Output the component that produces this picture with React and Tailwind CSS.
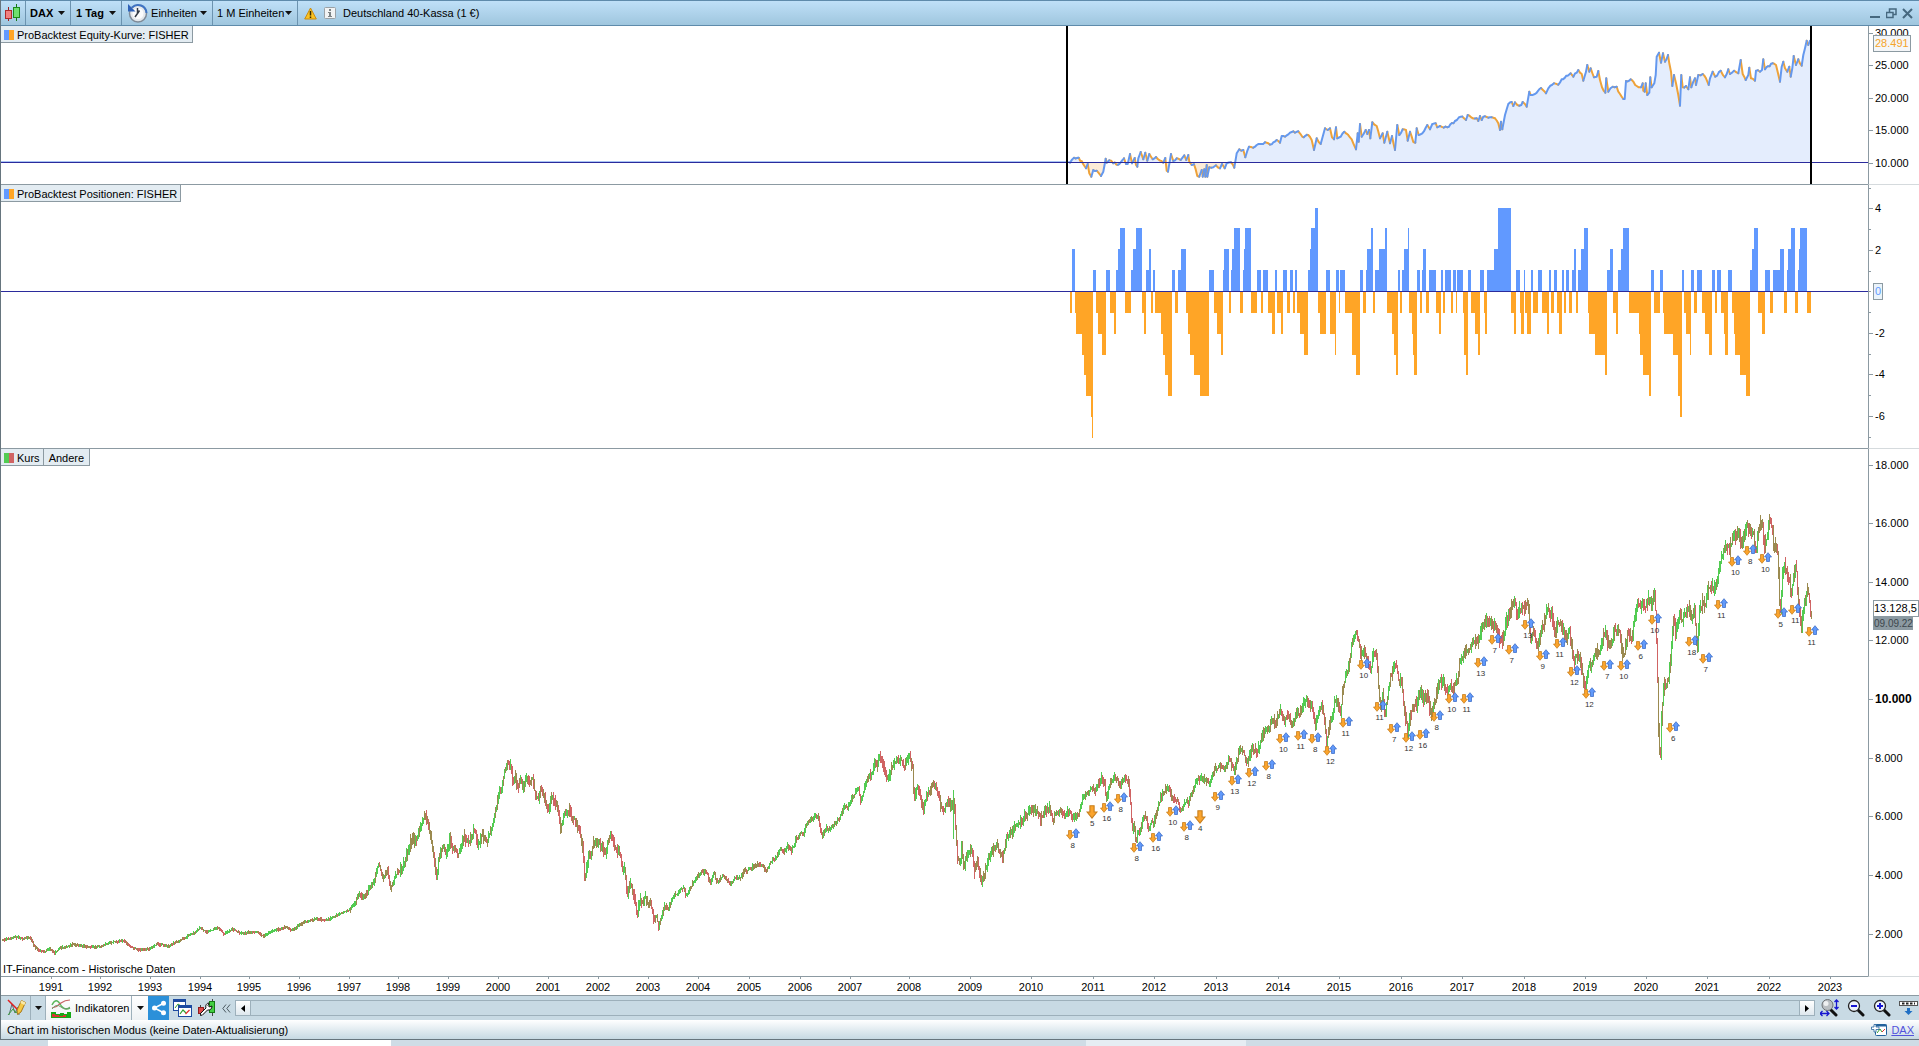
import React from 'react';

// Every leg is traced on its own fine grid: origin in chart pixels plus grid steps per pixel.
const leg = (x0, y0, step, points, stepY = step) => points.map(([x, y]) => [x0 + x / step, y0 + y / stepY]);

const priceAnchors = [
  ...leg(0, 700, 2.8, [
    [5, 718], [25, 715], [40, 708], [60, 715], [82, 710], [95, 738], [110, 752], [125, 752], [138, 745], [150, 758],
    [165, 742], [190, 738], [205, 730], [230, 738], [255, 740], [280, 738], [305, 726], [345, 720], [360, 735], [388, 750],
    [415, 745], [440, 730], [470, 737], [490, 725], [520, 710], [545, 695], [560, 683], [575, 695], [610, 682], [625, 700],
    [650, 686], [670, 698], [720, 694], [735, 708], [760, 692], [798, 680], [815, 690], [850, 665], [885, 655], [915, 658],
    [950, 640], [980, 625], [1003, 583], [1018, 588], [1045, 545], [1057, 490], [1073, 535], [1083, 505], [1092, 565],
    [1110, 515], [1122, 505], [1140, 455], [1155, 405], [1160, 430], [1175, 380], [1190, 340], [1205, 410], [1213, 465],
    [1220, 525], [1228, 475], [1240, 440], [1248, 475], [1257, 410], [1265, 440], [1280, 460], [1298, 408], [1312, 428],
    [1326, 385], [1336, 435], [1350, 400], [1362, 425], [1380, 360], [1390, 310], [1398, 260], [1405, 262], [1412, 205],
    [1420, 182], [1427, 195],
  ], 3),
  ...leg(510, 740, 3, [
    [0, 80], [8, 125], [14, 105], [22, 145], [30, 110], [38, 145], [47, 105], [55, 130], [66, 110], [74, 165], [85, 185],
    [92, 135], [103, 175], [113, 205], [126, 168], [135, 190], [145, 230], [149, 270], [153, 255], [160, 218], [178, 212],
    [185, 235], [200, 250], [210, 290], [217, 320], [223, 435], [229, 375], [236, 345], [240, 355], [248, 312], [258, 308],
    [268, 310], [284, 338], [296, 285], [306, 300], [318, 330], [325, 325], [333, 375], [337, 400], [341, 375], [351, 465],
    [358, 425], [368, 450], [380, 525], [387, 475], [396, 490], [403, 465], [413, 500], [418, 485], [428, 525], [435, 525],
    [444, 558], [452, 530], [463, 495], [473, 510], [485, 470], [500, 460], [518, 440], [527, 468], [545, 430], [573, 395],
    [590, 398], [600, 425], [610, 397], [620, 428], [638, 402], [658, 432], [675, 408], [688, 415], [700, 393], [740, 373],
    [757, 375], [765, 392], [785, 358], [795, 355], [808, 322], [820, 335], [832, 315], [842, 335], [855, 300], [872, 275],
    [878, 285], [890, 243], [905, 238], [922, 220], [928, 265], [937, 288], [946, 260], [955, 270], [985, 235], [1005, 190],
    [1010, 205], [1025, 172], [1043, 142], [1050, 185], [1062, 140], [1078, 100], [1082, 105], [1095, 60], [1100, 80],
    [1103, 52], [1113, 48], [1122, 95], [1130, 118], [1140, 95], [1150, 70], [1160, 55], [1175, 65], [1182, 90], [1188, 60],
    [1198, 50], [1206, 80], [1211, 185], [1216, 150], [1224, 145], [1232, 190], [1238, 205], [1247, 165], [1255, 160],
    [1269, 130], [1283, 165], [1297, 215], [1307, 185], [1325, 195], [1330, 180], [1335, 260], [1341, 350], [1348, 380],
    [1353, 310], [1361, 385], [1370, 340], [1384, 325], [1392, 390], [1400, 355], [1413, 432], [1425, 390], [1435, 350],
    [1447, 330], [1458, 310], [1468, 340], [1477, 350], [1487, 290], [1500, 280], [1512, 260], [1530, 245], [1551, 216],
    [1572, 204], [1590, 234], [1608, 204],
  ]),
  ...leg(1050, 600, 3, [
    [0, 630], [8, 665], [15, 635], [22, 645], [32, 625], [40, 650], [52, 630], [68, 655], [85, 635], [97, 595], [110, 580],
    [122, 562], [135, 568], [153, 532], [162, 545], [167, 600], [175, 560], [190, 525], [208, 555], [222, 530], [235, 545],
    [240, 610], [245, 690], [250, 665], [256, 725], [262, 700], [268, 695], [280, 640], [288, 660], [296, 690], [302, 655],
    [308, 670], [330, 590], [352, 555], [365, 590], [378, 600], [392, 635], [402, 610], [415, 600], [428, 565], [443, 535],
    [460, 535], [475, 550], [490, 510], [510, 495], [520, 510], [535, 475], [545, 500], [552, 515], [568, 440], [578, 455],
    [588, 490], [605, 445], [622, 455], [633, 410], [650, 385], [668, 355], [673, 375], [690, 330], [700, 370], [710, 335],
    [722, 375], [735, 345], [748, 335], [765, 303], [783, 320], [793, 380], [802, 345], [813, 315], [822, 360], [828, 425],
    [838, 375], [845, 350], [853, 300], [865, 315], [870, 340], [878, 250], [885, 220], [893, 205], [905, 125], [918, 100],
    [928, 135], [932, 165], [940, 145], [948, 180], [955, 190], [962, 215], [968, 150], [978, 165], [985, 270], [990, 330],
    [996, 280], [1003, 345], [1012, 280], [1020, 225], [1037, 188], [1045, 240], [1052, 240], [1060, 315], [1068, 375],
    [1072, 390], [1080, 340], [1088, 310], [1098, 315], [1108, 270], [1118, 300], [1130, 275], [1143, 350], [1150, 320],
    [1165, 245], [1180, 250], [1190, 275], [1198, 250], [1207, 270], [1215, 240], [1222, 250], [1228, 180], [1240, 170],
    [1252, 150], [1265, 130], [1275, 115], [1287, 110], [1300, 60], [1310, 65],
  ]),
  ...leg(1470, 450, 3, [
    [57, 510], [66, 515], [75, 540], [88, 560], [97, 565], [108, 510], [118, 490], [130, 455], [140, 490], [155, 475],
    [165, 465], [173, 448], [178, 575], [190, 550], [202, 585], [212, 545], [230, 480], [243, 490], [252, 545], [262, 510],
    [275, 535], [287, 570], [297, 540], [305, 600], [312, 640], [318, 610], [330, 630], [340, 695], [346, 705], [354, 645],
    [362, 645], [378, 605], [387, 610], [402, 545], [415, 580], [420, 590], [432, 540], [437, 530], [448, 545], [455, 615],
    [460, 620], [470, 555], [475, 540], [483, 570], [492, 505], [502, 460], [515, 470], [528, 465], [538, 440], [545, 470],
    [553, 420], [557, 540], [561, 680], [564, 830], [567, 900], [570, 910], [574, 780], [580, 700], [588, 700], [595, 690],
    [602, 610], [608, 500], [615, 540], [628, 480], [635, 520], [642, 490], [655, 465], [663, 510], [672, 480], [681, 600],
    [687, 480], [697, 455], [705, 460], [718, 400], [728, 420], [740, 395], [748, 340], [760, 290], [770, 285], [778, 300],
    [785, 260], [798, 255], [808, 255], [813, 280], [828, 227], [838, 235], [850, 260], [854, 305], [865, 235], [875, 205],
    [880, 290], [890, 260], [898, 205], [905, 240], [910, 285], [920, 280], [924, 370], [929, 500], [934, 400], [940, 335],
    [950, 375], [957, 390], [962, 430], [972, 360], [977, 345], [982, 450], [993, 525], [998, 480], [1012, 410], [1018, 470],
    [1022, 505], [1025, 490],
  ]),
];

const equityAnchors = [
  ...leg(1050, 20, 3, [
    [60, 428], [72, 413], [86, 413], [100, 433], [108, 445], [113, 432], [118, 460], [124, 470], [130, 450], [140, 452],
    [153, 468], [160, 455], [167, 416], [170, 428], [178, 421], [190, 430], [208, 432], [222, 415], [228, 432], [233, 432],
    [240, 402], [246, 430], [254, 414], [258, 435], [262, 440], [265, 415], [272, 396], [280, 418], [286, 398], [292, 422],
    [298, 402], [308, 418], [318, 411], [340, 428], [346, 414], [350, 452], [354, 455], [363, 402], [370, 423], [380, 415],
    [392, 420], [403, 406], [409, 420], [415, 405], [418, 425], [425, 435], [432, 433], [442, 468], [448, 470], [455, 450],
    [458, 470], [463, 448], [466, 470], [470, 435], [472, 470], [478, 442], [490, 442], [498, 436], [510, 445], [516, 432],
    [524, 445], [530, 430], [543, 427], [553, 443], [560, 400], [568, 388], [580, 390], [586, 412], [597, 380], [610, 383],
    [630, 372], [650, 368], [665, 373], [680, 360], [690, 368], [695, 348], [705, 350], [720, 338], [745, 334], [757, 350],
    [775, 345], [785, 360], [792, 390], [800, 355], [812, 372], [825, 325], [833, 330], [840, 325], [846, 352], [852, 358],
    [858, 322], [862, 355], [872, 350], [883, 335], [900, 352], [910, 370], [918, 388], [923, 340], [926, 365], [930, 312],
    [935, 350], [947, 330], [952, 342], [957, 330], [961, 355], [967, 307], [980, 318], [990, 355], [998, 340], [1003, 368],
    [1012, 335], [1020, 370], [1026, 348], [1035, 390], [1042, 315], [1048, 345], [1058, 328], [1068, 330], [1073, 362],
    [1080, 335], [1090, 366], [1096, 368], [1100, 325], [1106, 345], [1117, 340], [1132, 315], [1140, 328], [1147, 312],
    [1157, 310], [1162, 322], [1170, 318], [1192, 322], [1215, 303], [1232, 290], [1242, 295], [1248, 300], [1253, 285],
    [1265, 293], [1280, 295], [1285, 303], [1290, 288], [1295, 300], [1300, 290], [1320, 292],
  ]),
  ...leg(1480, 0, 3, [
    [35, 352], [45, 355], [55, 370], [60, 390], [63, 365], [67, 388], [75, 345], [85, 312], [95, 306], [100, 318],
    [105, 307], [112, 315], [124, 315], [128, 306], [140, 320], [148, 275], [152, 285], [165, 282], [183, 264], [198, 280],
    [205, 265], [222, 250], [235, 254], [245, 238], [272, 220], [280, 230], [295, 210], [305, 222], [310, 242], [318, 215],
    [322, 195], [328, 215], [332, 205], [342, 232], [350, 230], [355, 213], [360, 240], [366, 262], [376, 278], [379, 235],
    [385, 275], [398, 260], [410, 260], [415, 275], [425, 290], [430, 297], [434, 297], [438, 243], [452, 238], [470, 258],
    [483, 262], [488, 250], [490, 272], [494, 275], [497, 250], [502, 285], [508, 278], [511, 232], [515, 262], [523, 250],
    [527, 225], [530, 170], [537, 158], [543, 188], [549, 160], [555, 185], [564, 165], [568, 190], [573, 215], [577, 258],
    [582, 225], [588, 250], [595, 285], [600, 317], [604, 225], [608, 262], [618, 258], [625, 268], [630, 232], [634, 262],
    [645, 235], [648, 255], [655, 225], [668, 222], [678, 235], [686, 255], [690, 235], [698, 215], [706, 230], [722, 212],
    [735, 232], [745, 208], [750, 222], [762, 212], [775, 220], [782, 180], [788, 222], [797, 240], [805, 225], [808, 203],
    [813, 235], [825, 242], [828, 212], [840, 215], [846, 210], [850, 178], [855, 208], [878, 190], [888, 195], [900, 245],
    [905, 200], [910, 185], [915, 205], [922, 215], [928, 200], [932, 230], [937, 205], [941, 168], [948, 195], [955, 178],
    [965, 197], [970, 165], [975, 145], [980, 122], [985, 135], [990, 122],
  ]),
];

// [start, contracts], a run lasts until the next entry
const positionRuns = [
  ...[
    [60, -1], [66, 2], [75, -1], [78, -2], [96, -3], [102, -4], [108, -5], [123, -6], [126, -7], [129, 1], [138, -1],
    [144, -2], [156, -3], [168, 1], [180, -1], [192, -2], [198, 1], [204, 2], [210, 3], [225, -1], [243, 1], [249, 2],
    [258, 3], [276, -1], [282, -2], [288, 1], [297, 2], [303, -1], [309, 1], [315, -1], [333, -2], [339, -3], [345, -4],
    [354, -5], [366, 1], [375, -1], [384, 1], [393, 2], [408, -1], [414, -2], [420, -3], [432, -4], [450, -5], [477, 1],
    [492, -1], [501, -2], [513, -3], [519, 1], [522, 2], [537, -1], [543, 1], [546, 2], [552, 3], [570, -1], [579, 1],
    [582, 2], [585, 3], [603, -1], [621, 1], [633, -1], [639, 1], [654, -1], [666, -2], [675, 1], [681, -1], [693, -2],
    [699, 1], [711, -1], [720, 1], [729, -1], [735, 1], [741, -1], [750, -2], [762, -3], [774, 1], [780, 2], [783, 3],
    [795, 4], [804, -1], [810, -2], [828, 1], [840, -2], [855, -3], [858, 1], [867, -1], [870, 1], [885, -1], [906, -3],
    [918, -4], [930, 1], [939, -1], [948, 1], [951, 2], [963, 3], [969, -1], [975, 1], [987, 2], [1005, 3], [1011, -1],
    [1026, -2], [1032, -3], [1038, -4], [1044, 1], [1050, -1], [1056, 1], [1062, 2], [1074, 3], [1077, -1], [1086, -2],
    [1089, -3], [1092, -4], [1101, 1], [1110, -1], [1116, 1], [1119, 2], [1128, -1], [1137, 1], [1158, -1], [1167, -2],
    [1173, 1], [1179, -1], [1185, 1], [1203, -1], [1209, 1], [1218, -1], [1221, 1], [1239, -1], [1242, -3], [1248, -4],
    [1254, 1], [1263, -1], [1275, -2], [1284, -3], [1290, 1], [1302, -1], [1305, -2],
  ].map(([x, v]) => [1050 + x / 3, v]),
  ...[
    [81, 1], [102, 2], [114, 4], [153, -1], [162, -2], [168, 1], [180, -1], [183, -2], [192, 1], [195, -1], [201, -2],
    [213, 1], [219, -1], [234, 1], [246, -1], [261, -2], [267, 1], [273, -1], [282, 1], [291, -1], [297, -2], [306, 1],
    [312, -1], [318, 1], [327, -1], [336, 1], [342, 2], [348, -1], [354, 1], [363, 2], [372, 3], [384, -1], [387, -2],
    [405, -3], [435, -4], [441, 1], [450, 2], [459, -1], [468, -2], [474, 1], [483, 2], [489, 3], [507, -1], [537, -2],
    [540, -3], [549, -4], [567, -5], [573, 1], [582, -1], [600, 1], [609, -1], [612, -2], [639, -3], [654, -5], [660, -6],
    [666, 1], [672, -1], [678, -2], [690, -3], [693, 1], [702, -1], [711, 1], [726, -1], [735, -2], [747, -3], [756, 1],
    [765, -1], [771, 1], [783, -1], [792, -2], [795, -3], [804, 1], [816, -1], [822, -2], [825, -3], [840, -4], [858, -5],
    [870, 1], [876, 2], [882, 3], [894, -1], [906, -2], [915, 1], [930, -1], [939, 1], [960, 2], [972, -1], [981, 1],
    [984, 2], [993, 3], [1005, -1], [1014, 1], [1017, 2], [1020, 3], [1041, -1], [1053, 0],
  ].map(([x, v]) => [1460 + x / 3, v]),
];

// trade markers: x, y, label, single exit arrow
const markers = [
  ...[
    [59, 704, 8], [127, 635, 5, true], [161, 625, 16], [203, 596, 8], [251, 743, 8], [308, 715, 16], [359, 635, 10],
    [401, 680, 8], [451, 652, 4, true], [494, 590, 9], [545, 544, 13], [596, 518, 12], [647, 499, 8], [691, 418, 10],
    [743, 409, 11], [787, 418, 8], [832, 452, 12], [878, 370, 11], [932, 196, 10], [980, 320, 11], [1024, 388, 7],
    [1067, 415, 12], [1109, 406, 16], [1151, 352, 8], [1196, 298, 10], [1241, 298, 11], [1283, 190, 13],
  ].map(([x, y, n, big]) => ({ x: 1050 + x / 3, y: 600 + y / 3, n, big })),
  ...[
    [65, 569, 7], [116, 601, 7], [164, 524, 13], [209, 617, 9], [260, 583, 11], [304, 667, 12], [349, 731, 12],
    [403, 649, 7], [452, 648, 10], [503, 589, 6], [545, 509, 10], [601, 835, 6], [656, 575, 18], [698, 628, 7],
    [745, 466, 11], [787, 337, 10], [832, 304, 8], [877, 328, 10], [923, 491, 5], [967, 479, 11], [1016, 547, 11],
  ].map(([x, y, n]) => ({ x: 1470 + x / 3, y: 450 + y / 3, n })),
];

const yearTicks = [
  51, 100, 150, 200, 249, 299, 349, 398, 448, 498, 548, 598, 648, 698, 749, 800, 850, 909, 970, 1031, 1093, 1154, 1216,
  1278, 1339, 1401, 1462, 1524, 1585, 1646, 1707, 1769, 1830,
];

function random(seed) {
  let s = seed;
  return () => {
    s = (s * 1664525 + 1013904223) % 4294967296;
    return s / 4294967296;
  };
}

function spread(x) {
  if (x < 350) return 2;
  if (x < 400) return 5;
  if (x < 660) return 8;
  if (x < 870) return 4;
  if (x < 1050) return 8;
  if (x < 1250) return 6;
  if (x < 1400) return 8;
  return 10;
}

function priceBars() {
  const rnd = random(42);
  const paths = { up: '', down: '', mixed: '' };
  let i = 0;
  let prev = priceAnchors[0][1];
  for (let x = 2; x < 1812; x++) {
    while (i < priceAnchors.length - 2 && priceAnchors[i + 1][0] < x) i++;
    const [xa, ya] = priceAnchors[i];
    const [xb, yb] = priceAnchors[i + 1];
    const t = Math.min(1, Math.max(0, (x - xa) / (xb - xa)));
    const base = ya + (yb - ya) * t;
    const amp = spread(x);
    const y = base + (rnd() - 0.5) * amp * 0.8;
    const top = Math.round(Math.min(y, prev) - rnd() * amp * 0.7);
    const bottom = Math.round(Math.max(y, prev) + rnd() * amp * 0.7) + 1;
    const pick = rnd();
    const trend = y < prev ? 'up' : 'down';
    paths[pick < 0.38 ? 'mixed' : trend] += `M${x + 0.5} ${top}V${bottom}`;
    prev = base + (y - base) * 0.5;
  }
  return paths;
}

// fills the gaps between anchors with small daily moves
function dailyEquity() {
  const rnd = random(7);
  const line = [];
  equityAnchors.forEach(([x, y], i) => {
    line.push([x, y]);
    const next = equityAnchors[i + 1];
    if (!next) return;
    const parts = Math.floor((next[0] - x) / 1.5);
    for (let k = 1; k < parts; k++) {
      line.push([x + ((next[0] - x) * k) / parts, y + ((next[1] - y) * k) / parts + (rnd() - 0.5) * 2]);
    }
  });
  return line;
}

const bars = priceBars();
const equityLine = dailyEquity();
const toPath = (points) => points.map(([x, y], i) => `${i ? 'L' : 'M'}${x.toFixed(1)} ${y.toFixed(1)}`).join('');
const segments = (test) =>
  equityLine
    .slice(1)
    .map((p, i) => [equityLine[i], p])
    .filter(([a, b]) => test(a, b))
    .map(toPath)
    .join('');

const Plot = ({ viewBox, label, children }) => (
  <svg className="absolute inset-0 h-full w-full" viewBox={viewBox} preserveAspectRatio="none" role="img" aria-label={label}>
    {children}
  </svg>
);

function EquityPlot() {
  const area = `${toPath(equityLine)}V162.5H1070Z`;
  return (
    <Plot viewBox="1 26 1867 158" label="Equity-Kurve">
      <clipPath id="gain"><rect x="1" y="26" width="1867" height="136" /></clipPath>
      <clipPath id="loss"><rect x="1" y="163" width="1867" height="21" /></clipPath>
      <path d={area} fill="#e4edfd" clipPath="url(#gain)" />
      <path d={area} fill="#fdecd8" clipPath="url(#loss)" />
      <path d="M1 161.5H1070" stroke="#a9c4f5" />
      <g fill="none" strokeWidth="2" strokeLinecap="round">
        <path d={segments((a, b) => b[1] > a[1])} stroke="#eea239" />
        <path d={segments((a, b) => b[1] <= a[1])} stroke="#6498ee" />
      </g>
      <path d="M1 162.5H1868" stroke="#2b2b9c" />
      <path d="M1067 26V184M1811 26V184" stroke="#000" strokeWidth="2" />
    </Plot>
  );
}

function PositionsPlot() {
  return (
    <Plot viewBox="1 185 1867 263" label="Positionen">
      <g shapeRendering="crispEdges">
        {positionRuns.slice(0, -1).map(([x, v], i) => {
          const size = Math.round(Math.abs(v) * 20.85);
          return (
            <rect
              key={x}
              x={x}
              y={v > 0 ? 291 - size : 292}
              width={positionRuns[i + 1][0] - x}
              height={size}
              fill={v > 0 ? '#6199ff' : '#ffa526'}
            />
          );
        })}
        <rect x="1" y="291" width="1867" height="1" fill="#2b2b9c" />
      </g>
    </Plot>
  );
}

const ArrowDown = ({ className }) => (
  <svg className={className} viewBox="0 0 8 10">
    <path d="M2.5 .5H5.5V5H7.5L4 9.3.5 5H2.5Z" fill="#fba42c" stroke="#c87f1e" strokeWidth=".8" />
  </svg>
);

const ArrowUp = ({ className }) => (
  <svg className={className} viewBox="0 0 8 10">
    <path d="M2.5 9.5H5.5V5H7.5L4 .7.5 5H2.5Z" fill="#6199fb" stroke="#3f6fc8" strokeWidth=".8" />
  </svg>
);

function Marker({ x, y, n, big }) {
  return (
    <div
      className="absolute flex w-4 flex-col items-center text-[8px] leading-[9px] text-[#333]"
      style={{
        left: `${((x - 1 - (big ? 8 : 5)) / 1867) * 100}%`,
        top: `${((y - 449 - 7) / 527) * 100}%`,
      }}
    >
      {big ? (
        <ArrowDown className="h-[14px] w-3" />
      ) : (
        <span className="flex h-[13px]">
          <ArrowDown className="mt-[2px] h-[10px] w-2 shrink-0" />
          <ArrowUp className="-ml-[2px] h-[10px] w-2 shrink-0" />
        </span>
      )}
      {n}
    </div>
  );
}

function YAxis({ labels, className, bold, children }) {
  return (
    <div className={`relative flex w-[51px] shrink-0 flex-col justify-between border-b border-l border-b-[#d5dadd] border-l-[#8c9aa2] ${className}`}>
      {labels.map((text, i) => (
        <div key={i} className="flex h-0 items-center">
          <span className={text ? 'h-px w-1 bg-[#8c9aa2]' : 'h-px w-[2px] bg-[#8c9aa2]'} />
          <span className={text === bold ? 'ml-[2px] text-[12px] font-bold' : 'ml-[2px]'}>{text}</span>
        </div>
      ))}
      {children}
    </div>
  );
}

const Swatch = ({ left, right }) => (
  <svg className="h-[10px] w-[10px]" viewBox="0 0 10 10">
    <rect width="5" height="10" fill={left} />
    <rect x="5" width="5" height="10" fill={right} />
  </svg>
);

const Tag = ({ children }) => (
  <button type="button" className="flex h-[17px] items-center gap-[3px] border-r border-b border-[#8c9aa2] bg-[#e3ecf2] px-[3px] pt-[2px] whitespace-nowrap">
    {children}
  </button>
);

const Caret = () => (
  <svg className="h-1 w-[7px]" viewBox="0 0 7 4">
    <path d="M0 0H7L3.5 4Z" fill="#111" />
  </svg>
);

const HeaderButton = ({ className, children }) => (
  <button type="button" aria-haspopup="menu" className={`flex h-full items-center justify-between border-r border-[#6c93af] pr-[5px] ${className}`}>
    {children}
  </button>
);

function CandlesIcon() {
  return (
    <svg className="h-[18px] w-[18px]" viewBox="0 0 18 18">
      <path d="M4.5 3V17" stroke="#a02020" />
      <rect x="1.5" y="6.500" width="6" height="8" fill="#f08080" stroke="#b02a2a" />
      <path d="M12.500 0V17" stroke="#157a15" />
      <rect x="9.500" y="3.500" width="6" height="10" fill="#6fe06f" stroke="#1c8a1c" />
    </svg>
  );
}

function ClockIcon() {
  return (
    <svg className="h-5 w-5" viewBox="0 0 20 20">
      <circle cx="10" cy="10.500" r="8.500" fill="#e4e8ec" stroke="#7f8b98" strokeWidth="1.500" />
      <circle cx="10" cy="10.500" r="5.500" fill="#fafbfc" />
      <path d="M4 4.500A8.500 8.500 0 0 1 18.500 10" fill="none" stroke="#3f74c4" strokeWidth="2" />
      <path d="M0 1V8.500H7.500Z" fill="#2f62b8" />
      <path d="M9.500 5V10.500L7 14M9.500 10.500L11.500 7.500" fill="none" stroke="#333b46" strokeWidth="1.500" />
    </svg>
  );
}

function WarningIcon() {
  return (
    <svg className="h-[13px] w-[13px]" viewBox="0 0 13 13">
      <path d="M6.500 1L12.300 12H.7Z" fill="#fbc321" stroke="#c98a10" strokeLinejoin="round" />
      <path d="M6.500 4V8.500M6.500 9.500V11" stroke="#3a2a00" strokeWidth="1.500" />
    </svg>
  );
}

function InfoIcon() {
  return (
    <svg className="h-3 w-3" viewBox="0 0 12 12">
      <rect x=".5" y=".5" width="11" height="11" rx="1" fill="#f1f3f4" stroke="#9aa1a6" />
      <path d="M5 2H7V4H5ZM4 5H7V9H8V10H4V9H5V6H4Z" fill="#7d8386" />
    </svg>
  );
}

function Header() {
  return (
    <header className="flex h-[26px] shrink-0 items-center border-t border-b border-[#5f8bab] bg-gradient-to-b from-[#bfe0f8] to-[#9fc6de]">
      <button type="button" aria-label="Chartstil" className="flex h-full w-[25px] items-center border-r border-[#6c93af] pl-[3px]">
        <CandlesIcon />
      </button>
      <HeaderButton className="w-[45px] pl-1 font-bold">DAX<Caret /></HeaderButton>
      <HeaderButton className="w-[51px] pl-[5px] font-bold">1 Tag<Caret /></HeaderButton>
      <HeaderButton className="w-[91px] pl-[6px]">
        <ClockIcon />
        Einheiten
        <Caret />
      </HeaderButton>
      <HeaderButton className="w-[85px] pl-1 whitespace-nowrap">1 M Einheiten<Caret /></HeaderButton>
      <div className="flex items-center gap-[7px] pl-[6px]">
        <WarningIcon />
        <InfoIcon />
        <h1>Deutschland 40-Kassa (1 €)</h1>
      </div>
      <div className="ml-auto flex items-center gap-[5px] pr-[6px] text-[#46687f]">
        <button type="button" aria-label="Minimieren">
          <svg className="h-[11px] w-[11px]" viewBox="0 0 11 11"><path d="M0 9H10" stroke="currentColor" strokeWidth="2" /></svg>
        </button>
        <button type="button" aria-label="Wiederherstellen">
          <svg className="h-[11px] w-[11px]" viewBox="0 0 11 11">
            <path d="M3.500 4V1H10V6.500H7.500M.5 4.500H7V9.500H.5Z" fill="none" stroke="currentColor" strokeWidth="1.500" />
          </svg>
        </button>
        <button type="button" aria-label="Schließen">
          <svg className="h-[11px] w-[11px]" viewBox="0 0 11 11"><path d="M1 1L10 10M10 1L1 10" stroke="currentColor" strokeWidth="2" /></svg>
        </button>
      </div>
    </header>
  );
}

const Magnifier = ({ children }) => (
  <svg className="h-[18px] w-[18px]" viewBox="0 0 18 18">
    <path d="M10.500 10.500L16 16" stroke="#111" strokeWidth="3" strokeLinecap="round" />
    <circle cx="7" cy="7" r="5.500" fill="#eef3fb" stroke="#222" strokeWidth="1.300" />
    {children}
  </svg>
);

function Toolbar() {
  return (
    <div className="flex h-[25px] shrink-0 items-center border-t border-[#8c9aa2] bg-[#c8dae4]">
      <button type="button" aria-label="Zeichnen" className="flex h-full w-[30px] items-center border-r border-[#9db0bb] pl-[6px]">
        <svg className="h-[18px] w-5" viewBox="0 0 20 18">
          <path d="M2 16L5 5 8 14 11 8 12 16" fill="none" stroke="#5b6c75" />
          <path d="M1 16L6 10 9 14 16 4" fill="none" stroke="#3aa33a" />
          <path d="M1 1L12 12" stroke="#e02020" strokeWidth="1.500" />
          <path d="M10 11L14.500 1.500 18.500 3.500 14 13 10.500 15.500Z" fill="#f5c842" stroke="#a8781a" />
          <path d="M14.500 1.500L18.500 3.500 17.500 6 13.300 4Z" fill="#f7e8a8" />
        </svg>
      </button>
      <button type="button" aria-label="Zeichenwerkzeuge" className="flex h-full w-[15px] items-center justify-center border-r border-[#9db0bb]"><Caret /></button>
      <button type="button" className="flex h-full w-[86px] items-center gap-1 border-r border-[#9db0bb] bg-gradient-to-b from-white to-[#eef2f4] pl-[5px]">
        <svg className="h-[19px] w-5 shrink-0" viewBox="0 0 20 19">
          <path d="M1 6Q5 -2 9 5T19 9" fill="none" stroke="#5cb85c" strokeWidth="1.500" />
          <path d="M1 9Q6 8 10 4Q14 1 19 1" fill="none" stroke="#c86464" strokeWidth="1.200" />
          <path d="M1 10Q5 4 10 8T19 8" fill="none" stroke="#6c9c6c" />
          <path d="M0 13H5V15H9V14H13V15H16V13H20V19H0Z" fill="#15a815" />
          <path d="M1 15H4V16H8V17H12V16H15V18H1Z" fill="#d83030" />
        </svg>
        Indikatoren
      </button>
      <button type="button" aria-label="Indikatorliste" className="flex h-full w-4 items-center justify-center bg-gradient-to-b from-white to-[#eef2f4]"><Caret /></button>
      <button type="button" aria-label="Teilen" className="flex h-full w-[21px] items-center justify-center bg-[#2b90d9]">
        <svg className="h-4 w-4" viewBox="0 0 16 16">
          <path d="M13 3L3.500 8 13 13" fill="none" stroke="#fff" strokeWidth="1.500" />
          <g fill="#fff"><circle cx="3.500" cy="8" r="2.500" /><circle cx="12.500" cy="3.300" r="2.500" /><circle cx="12.500" cy="12.700" r="2.500" /></g>
        </svg>
      </button>
      <button type="button" aria-label="Charts duplizieren" className="ml-1">
        <svg className="h-[18px] w-[19px]" viewBox="0 0 19 18">
          <rect x=".5" y=".5" width="12" height="11" fill="#fff" stroke="#1c4aa0" />
          <path d="M.5 .5H12.500V3H.5Z" fill="#1c4aa0" />
          <path d="M2 9L5 5 8 7" fill="none" stroke="#30a030" />
          <rect x="5.500" y="6.500" width="13" height="11" fill="#fff" stroke="#1c4aa0" />
          <path d="M5.500 6.500H18.500V9H5.500Z" fill="#1c4aa0" />
          <path d="M7 15L10 11 13 14" fill="none" stroke="#30a030" strokeWidth="1.200" />
          <path d="M12.500 15L16.500 11" stroke="#e03030" strokeWidth="1.200" />
        </svg>
      </button>
      <button type="button" aria-label="Einstellungen" className="ml-[6px]">
        <svg className="h-[18px] w-[18px]" viewBox="0 0 18 18">
          <path d="M2.500 6V17M14.500 0V17" stroke="#444" />
          <rect x=".5" y="8.500" width="5" height="6" fill="#e04848" stroke="#8f1f1f" />
          <rect x="11.500" y="2.500" width="5" height="11" fill="#42cf42" stroke="#157a15" />
          <path d="M2 15L8 9C7 6 9 4 11 4L10 6.500 11.500 8 14 7C14 10 12 11.500 9.500 11L4 16.500Z" fill="#fff" stroke="#111" />
        </svg>
      </button>
      <button type="button" aria-label="Leiste einklappen" className="ml-[6px]">
        <svg className="h-[9px] w-[9px]" viewBox="0 0 9 9"><path d="M4 .5L.8 4.500 4 8.500M8 .5L4.800 4.500 8 8.500" fill="none" stroke="#4c5a62" /></svg>
      </button>
      <div className="ml-1 flex h-4 flex-1 items-center border border-[#9db0bb]">
        <button type="button" aria-label="Zurück" className="flex h-full w-[15px] items-center justify-center border-r border-[#9db0bb] bg-gradient-to-b from-white to-[#dfe8ee]">
          <svg className="h-[7px] w-1" viewBox="0 0 4 7"><path d="M4 0V7L0 3.500Z" fill="#000" /></svg>
        </button>
        <button type="button" aria-label="Vor" className="ml-auto flex h-full w-[15px] items-center justify-center border-l border-[#9db0bb] bg-gradient-to-b from-white to-[#dfe8ee]">
          <svg className="h-[7px] w-1" viewBox="0 0 4 7"><path d="M0 0V7L4 3.500Z" fill="#000" /></svg>
        </button>
      </div>
      <div className="flex items-center gap-2 pr-px pl-[5px]">
        <button type="button" aria-label="Zoom anpassen">
          <svg className="h-[18px] w-[19px]" viewBox="0 0 19 18">
            <path d="M10.500 10.500L16 16" stroke="#111" strokeWidth="3" strokeLinecap="round" />
            <circle cx="7.500" cy="6" r="5.500" fill="#b9bec2" stroke="#6d7174" />
            <circle cx="6" cy="4.500" r="2.500" fill="#eef0f1" />
            <path d="M0 14.500H9M2.500 12L0 14.500 2.500 17M6.500 12L9 14.500 6.500 17M16.500 1V10M14.500 3L16.500 1 18.500 3M14.500 8L16.500 10 18.500 8" fill="none" stroke="#1616d0" strokeWidth="1.300" />
          </svg>
        </button>
        <button type="button" aria-label="Verkleinern">
          <Magnifier><path d="M4 7H10" stroke="#1616d0" strokeWidth="2" /></Magnifier>
        </button>
        <button type="button" aria-label="Vergrößern">
          <Magnifier><path d="M4 7H10M7 4V10" stroke="#1616d0" strokeWidth="2" /></Magnifier>
        </button>
        <button type="button" aria-label="Leiste ausblenden">
          <svg className="h-4 w-[19px]" viewBox="0 0 19 16">
            <rect x=".5" y="1.500" width="18" height="4" fill="#fff" stroke="#555" />
            <path d="M3 3.500H16" stroke="#222" strokeWidth="2" strokeDasharray="2.500 1.500" />
            <path d="M8 8H11V11H13.500L9.500 15 5.500 11H8Z" fill="#1f6fc4" />
          </svg>
        </button>
      </div>
    </div>
  );
}

function StatusBar() {
  return (
    <footer className="flex h-5 shrink-0 items-center justify-between border-b border-[#66757e] bg-gradient-to-b from-white to-[#c6d9e3] pt-px pr-[5px] pl-[6px]">
      <span>Chart im historischen Modus (keine Daten-Aktualisierung)</span>
      <span className="flex items-center gap-1">
        <svg className="h-3 w-4" viewBox="0 0 16 12">
          <rect x="4.500" y=".5" width="11" height="11" rx="1" fill="#fff" stroke="#23629c" />
          <path d="M4.500 .5H15.500V2.500H4.500Z" fill="#23629c" />
          <path d="M6 9L9 5 11 8" fill="none" stroke="#30a030" />
          <path d="M11 8L14 5" stroke="#e03030" />
          <path d="M3 .5H5V3H8V5.500H5V8H3V5.500H.5V3H3Z" fill="#fff" stroke="#23629c" strokeWidth=".8" />
        </svg>
        <a href="#dax" className="text-[11px] leading-none text-[#5252dc] underline">DAX</a>
      </span>
    </footer>
  );
}

function YearAxis() {
  return (
    <div className="flex h-[18px] shrink-0 pr-[51px]">
      {yearTicks.map((x, i) => (
        <div key={x} className="flex basis-0 justify-end" style={{ flexGrow: x - (i ? yearTicks[i - 1] : 1) }}>
          <div className="flex w-0 flex-col items-center">
            <span className="h-[3px] w-px bg-[#8c9aa2]" />
            <span className="leading-[16px]">{1991 + i}</span>
          </div>
        </div>
      ))}
      <div className="basis-0" style={{ flexGrow: 1868 - 1830 }} />
    </div>
  );
}

export default function App() {
  return (
    <div className="flex h-screen flex-col overflow-hidden bg-[#cfdce6] font-['Liberation_Sans',Arial,sans-serif] text-[11px] leading-[13px] text-black">
      <div className="flex min-h-0 flex-1 flex-col border-l border-[#66757e] bg-white">
        <Header />
        <section className="flex h-[159px] shrink-0">
          <div className="relative flex-1 border-b border-[#8c9aa2]">
            <EquityPlot />
            <div className="relative flex"><Tag><Swatch left="#6199ff" right="#ffa526" />ProBacktest Equity-Kurve: FISHER</Tag></div>
          </div>
          <YAxis labels={['30.000', '25.000', '20.000', '15.000', '10.000']} className="pt-[7px] pb-[21px]">
            <span className="absolute top-[9px] left-1 flex h-[17px] items-center border border-[#8c9aa2] bg-[#f4f6f8] px-px text-[#f5a42a]">28.491</span>
          </YAxis>
        </section>
        <section className="flex h-[264px] shrink-0">
          <div className="relative flex-1 border-b border-[#8c9aa2]">
            <PositionsPlot />
            <div className="relative flex"><Tag><Swatch left="#6199ff" right="#ffa526" />ProBacktest Positionen: FISHER</Tag></div>
          </div>
          <YAxis labels={['', '4', '', '2', '', '', '', '-2', '', '-4', '', '-6', '']} className="pt-[3px] pb-[11px]">
            <span className="absolute top-[98px] left-1 flex h-[17px] items-center border border-[#8c9aa2] bg-[#eaf3fa] px-px text-[#6199ff]">0</span>
          </YAxis>
        </section>
        <section className="flex min-h-0 flex-1">
          <div className="relative flex flex-1 flex-col justify-between border-b border-[#8c9aa2]">
            <Plot viewBox="1 449 1867 527" label="Kurs">
              <path d={bars.mixed} stroke="#9b8a50" />
              <path d={bars.up} stroke="#52cc52" />
              <path d={bars.down} stroke="#d06464" />
              <path d="M953.500 790V839" stroke="#52cc52" />
            </Plot>
            {markers.map((m) => <Marker key={m.x} {...m} />)}
            <div className="relative flex">
              <Tag><Swatch left="#52cc52" right="#d06464" />Kurs</Tag>
              <Tag><span className="px-[2px]">Andere</span></Tag>
            </div>
            <span className="relative pl-[2px]">IT-Finance.com - Historische Daten</span>
          </div>
          <YAxis
            labels={['18.000', '16.000', '14.000', '12.000', '10.000', '8.000', '6.000', '4.000', '2.000']}
            bold="10.000"
            className="pt-4 pb-[42px]"
          >
            <div className="absolute top-[151px] left-1 w-[46px]">
              <div className="flex h-[17px] items-center border border-[#8c9aa2] bg-white">13.128,5</div>
              <div className="flex h-[13px] w-10 items-center bg-[#8c9aa2] pl-px text-[10px] text-[#3d474d]">09.09.22</div>
            </div>
          </YAxis>
        </section>
        <YearAxis />
        <Toolbar />
        <StatusBar />
      </div>
      <div className="flex h-[6px] shrink-0 pl-12">
        <div className="w-[343px] bg-white" />
        <div className="ml-[695px] w-40 bg-[#e6edf3]" />
      </div>
    </div>
  );
}
